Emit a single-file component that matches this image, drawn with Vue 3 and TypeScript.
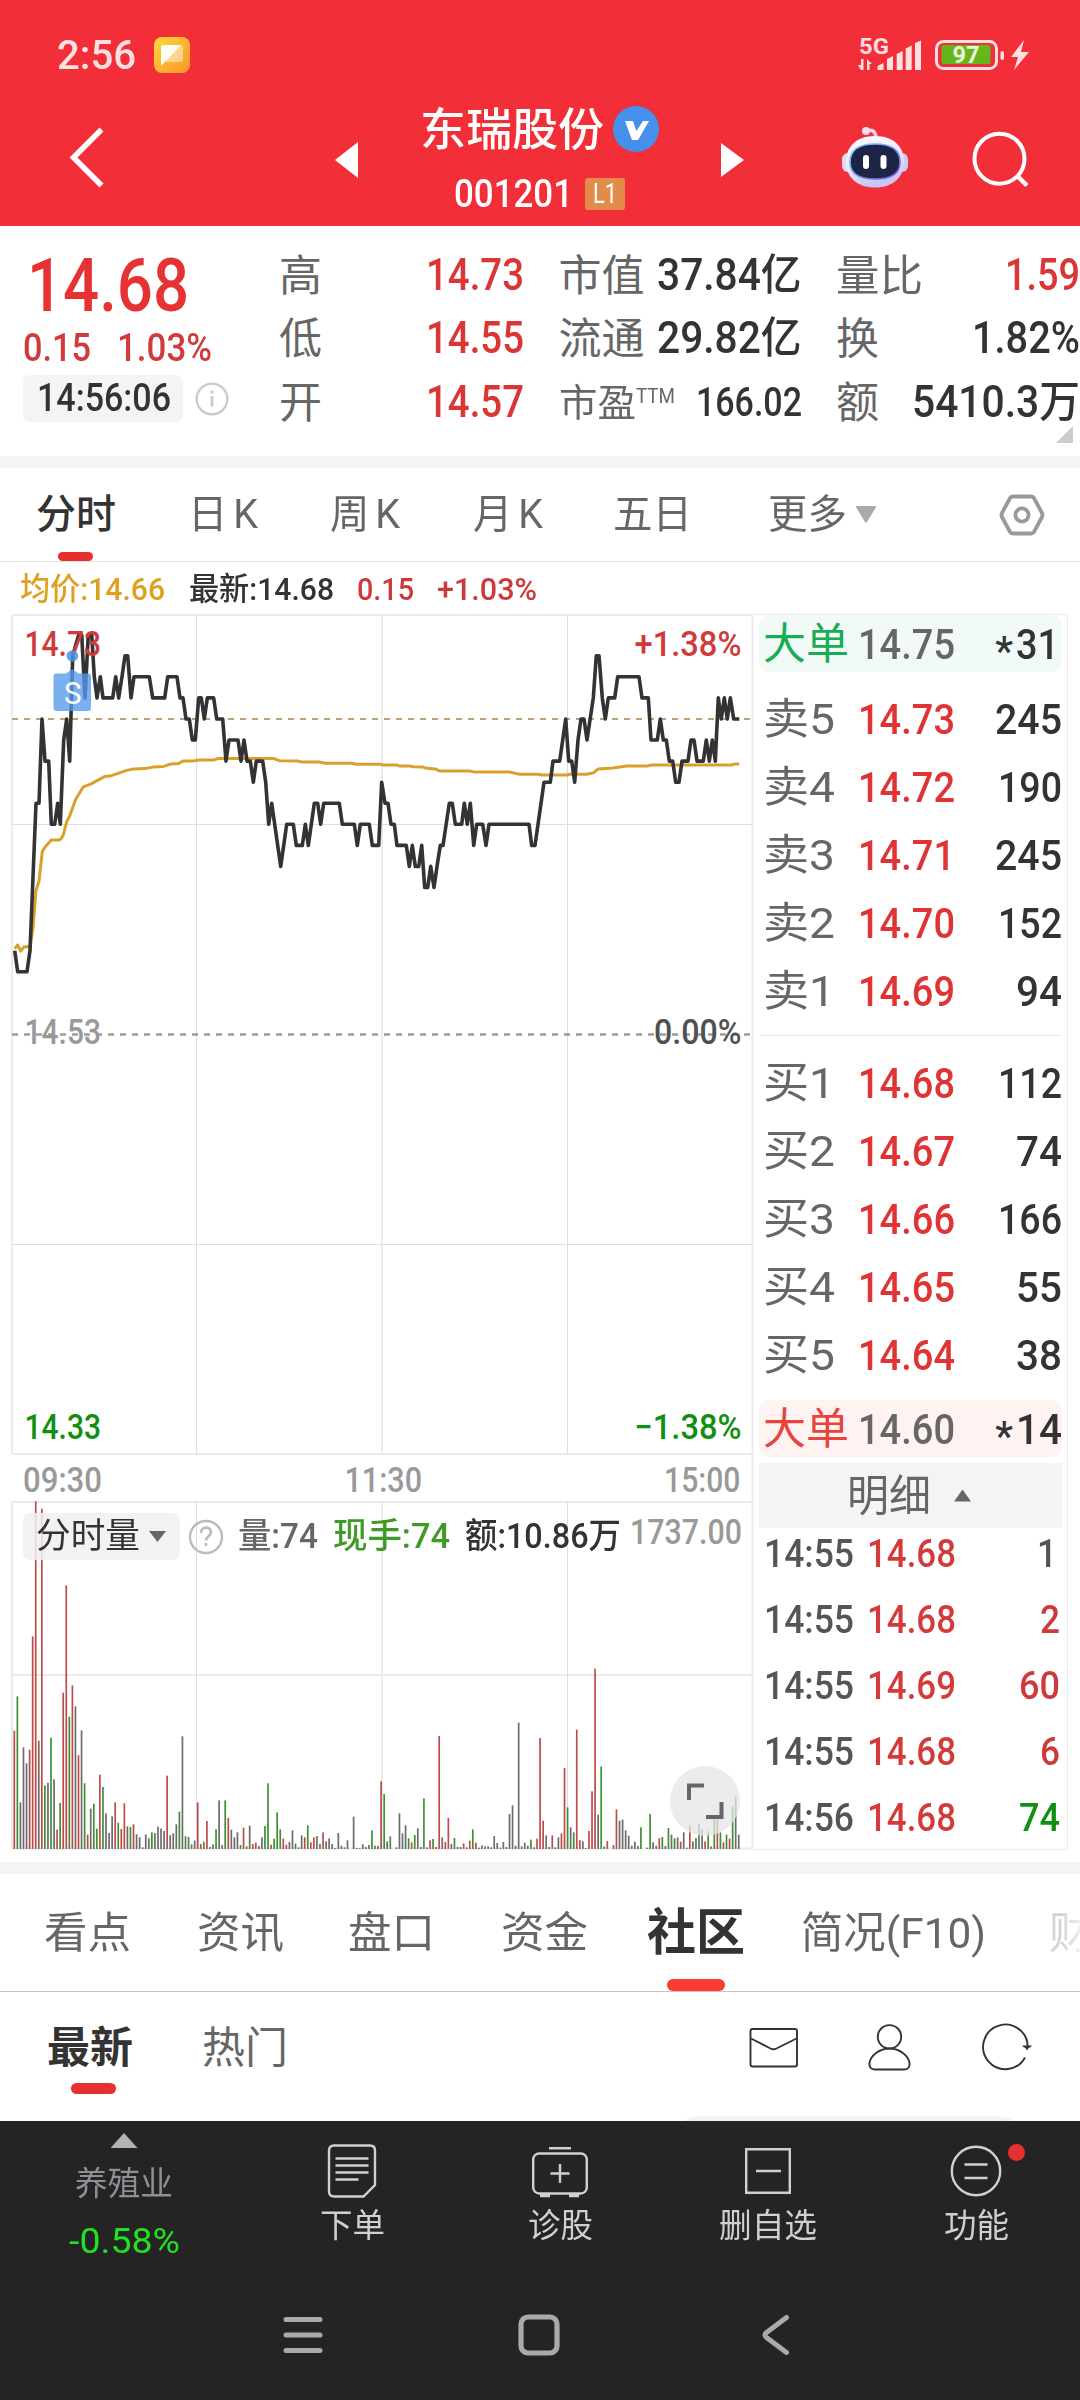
<script setup lang="ts">
// v-fit sets the laid-out width of a text run in pixels; glyphs are condensed or widened to fill it.
const vFit = {
  mounted(el: HTMLElement, { value }: { value: number }) {
    el.style.display = 'inline-block'
    el.style.whiteSpace = 'nowrap'
    el.style.flex = 'none'
    const natural = el.getBoundingClientRect().width
    el.style.transformOrigin = '0 50%'
    el.style.transform = `scaleX(${value / natural})`
    el.style.marginRight = `${value - natural}px`
  },
}

type Stat = { label: string; lw: number; value: string; vw: number; red?: boolean; ttm?: boolean }
const stats: Stat[] = [
  { label: '高', lw: 43, value: '14.73', vw: 98, red: true },
  { label: '市值', lw: 86, value: '37.84亿', vw: 144.5 },
  { label: '量比', lw: 87, value: '1.59', vw: 75, red: true },
  { label: '低', lw: 43, value: '14.55', vw: 98, red: true },
  { label: '流通', lw: 86, value: '29.82亿', vw: 144.5 },
  { label: '换', lw: 43, value: '1.82%', vw: 108 },
  { label: '开', lw: 43, value: '14.57', vw: 98, red: true },
  { label: '市盈', lw: 77, value: '166.02', vw: 106, ttm: true },
  { label: '额', lw: 43, value: '5410.3万', vw: 168 },
]

const periods = [
  { name: '分时', w: 80 },
  { name: '日K', w: 76 },
  { name: '周K', w: 76 },
  { name: '月K', w: 76 },
  { name: '五日', w: 79 },
  { name: '更多', w: 79 },
]

const asks = [
  ['卖5', '14.73', '245', 67], ['卖4', '14.72', '190', 64], ['卖3', '14.71', '245', 67],
  ['卖2', '14.70', '152', 64], ['卖1', '14.69', '94', 46],
] as [string, string, string, number][]
const bids = [
  ['买1', '14.68', '112', 64], ['买2', '14.67', '74', 46], ['买3', '14.66', '166', 64],
  ['买4', '14.65', '55', 46], ['买5', '14.64', '38', 46],
] as [string, string, string, number][]
const ticks = [
  ['14:55', '14.68', '1', 'flat', 20], ['14:55', '14.68', '2', 'up', 20], ['14:55', '14.69', '60', 'up', 41],
  ['14:55', '14.68', '6', 'up', 20], ['14:56', '14.68', '74', 'down', 41],
] as [string, string, string, string, number][]

// Price trace: x in thirds of a pixel, price in cents over 14.00
const trace: number[][] = [
  [44,57],[53,56],[81,56],[90,57],[108,64],[117,64],[126,68],[135,66],[146,66],[154,63],[164,63],[173,64],[181,63],
  [191,67],[200,68],[209,66],[218,71],[236,72],[245,72],[255,69],[265,72],[275,72],[283,70],[291,69],[301,70],[309,69],
  [338,69],[347,70],[356,69],[366,70],[375,71],[383,71],[393,69],[402,70],[448,70],[458,69],[494,69],[503,70],[531,70],
  [540,69],[549,69],[558,68],[568,68],[577,67],[586,67],[596,69],[604,69],[613,68],[622,69],[641,69],[650,68],[668,68],
  [678,66],[687,67],[714,67],[723,66],[732,67],[741,66],[751,66],[760,65],[769,66],[788,66],[797,65],[806,63],[815,64],
  [842,61],[860,63],[880,63],[889,62],[907,62],[916,63],[925,62],[943,64],[953,64],[962,63],[971,64],[1018,64],[1027,63],
  [1063,63],[1072,62],[1081,63],[1108,63],[1117,62],[1136,62],[1145,65],[1155,64],[1164,64],[1173,63],[1183,63],
  [1191,62],[1219,62],[1228,61],[1237,62],[1246,61],[1256,61],[1265,62],[1274,60],[1283,60],[1292,61],[1302,60],[1311,61],
  [1321,62],[1329,62],[1348,64],[1357,64],[1366,63],[1385,63],[1393,64],[1402,63],[1411,64],[1421,62],[1430,63],[1448,63],
  [1458,62],[1467,63],[1587,63],[1595,62],[1605,62],[1632,65],[1651,65],[1659,66],[1679,66],[1697,68],[1706,66],[1715,66],
  [1724,65],[1734,67],[1743,68],[1752,68],[1761,67],[1780,69],[1789,71],[1797,71],[1807,69],[1816,68],[1825,69],[1844,69],
  [1853,70],[1917,70],[1926,69],[1945,69],[1953,67],[1972,67],[1981,68],[1990,67],[1999,67],[2008,66],[2018,66],[2027,65],
  [2037,65],[2046,66],[2064,66],[2073,67],[2082,67],[2091,66],[2110,66],[2119,67],[2128,66],[2137,67],[2146,66],[2155,69],
  [2164,68],[2173,69],[2182,68],[2191,69],[2201,68],[2218,68],
]
const priceLine = trace.map(([x, c]) => `${(x / 3).toFixed(1)},${(1035 - (c - 53) * 21.07).toFixed(1)}`).join(' ')

// Average price trace
const average: number[][] = [
  [44,1368],[53,1358],[62,1375],[71,1364],[90,1362],[99,1310],[108,1205],[117,1180],[127,1096],[136,1083],[154,1064],
  [178,1064],[184,1060],[190,1050],[200,1012],[209,997],[227,950],[250,915],[273,907],[315,886],[330,885],[380,869],
  [402,865],[435,864],[458,860],[490,858],[514,851],[535,850],[549,843],[580,843],[598,840],[640,840],[655,836],[822,836],
  [838,842],[895,843],[905,846],[960,846],[975,849],[1055,849],[1068,852],[1140,852],[1150,854],[1190,854],[1200,857],
  [1230,857],[1240,859],[1268,860],[1277,862],[1305,865],[1320,871],[1410,871],[1425,874],[1530,874],[1558,880],
  [1615,880],[1625,882],[1700,882],[1710,880],[1760,880],[1780,876],[1795,865],[1840,862],[1880,857],[1940,857],
  [1955,854],[2195,854],[2205,851],[2218,851],
]
const averageLine = average.map(([x, y]) => `${(x / 3).toFixed(1)},${(460 + y / 2.8).toFixed(1)}`).join(' ')

// One entry per minute: bar height in thirds of a pixel and direction (r up, g down, k flat)
const minuteVolume =
  '355r 458g 140k 305k 257k 298r 638r 1043r 325k 1021r 191g 199k 334g 209k 58r 138g 469r 791r 397g 491r 428k 281r 356k 197g 43r 121k 136g 61g 223r 186g 107k 48k 98k 140r 79g 60r 137r 68k 66g 74r 44k 35k 5k 44k 32k 50g 48k 67k 61k 54k 220r 41k 47k 74k 112g 338k 38g 36k 14g 25k 140r 15r 22g 84r 6k 14k 59g 146k 12k 146g 93r 58k 35k 50k 12g 64r 8g 70k 15r 19r 9k 35k 69g 197g 13r 31g 110g 59g 31r 13r 21k 56k 16g 5k 41k 35r 71g 20r 35r 39k 15g 50r 23k 32k 15k 3k 48k 10k 5k 26k 0k 97k 3g 3r 14k 6k 12k 56g 10k 9k 203r 165g 23k 38g 0k 5k 107k 47k 71k 32g 20r 42g 62k 6r 152g 5k 26r 30g 6r 339r 35k 21r 93r 15k 33g 6k 6k 17r 5r 25r 59g 19r 4k 11k 8g 8r 5k 39k 18k 4k 21k 6k 105k 131k 10k 379k 8k 19k 10k 28g 5k 31r 333r 85r 41k 6k 41r 5k 35k 47r 243r 125g 65k 50g 358r 26r 23k 3g 54r 173r 541r 103k 248g 8g 24r 0k 12k 119r 85k 88k 56k 40k 10k 22k 9k 65g 0k 4k 105g 20k 10k 32r 36g 9k 63g 43k 32g 35k 22r 50k 4k 69r 23k 33g 75k 57k 23r 53g 8r 96g 89r 50g 20r 43g 31r 128g 157k 43k'
const barColor: Record<string, string> = { r: '#c04a4a', g: '#3f8f35', k: '#6c6c6c' }
const bars = minuteVolume.split(' ').map((entry, i) => {
  const h = parseInt(entry) / 3
  return { x: (42.2 + 9.17 * i) / 3 - 0.6, y: 1849 - h, h, color: barColor[entry.slice(-1)] }
})

const sections = [
  { name: '看点', w: 87 }, { name: '资讯', w: 87 }, { name: '盘口', w: 87 },
  { name: '资金', w: 87 }, { name: '社区', w: 98, active: true },
  { name: '简况(F10)', w: 185 }, { name: '财', w: 43, faded: true },
]
</script>

<template>
  <div class="app">
    <header class="header">
      <div class="status">
        <span v-fit="79" class="clock">2:56</span>
        <svg class="note" width="36" height="36" viewBox="0 0 36 36">
          <defs><linearGradient id="note" x1="0" y1="0" x2="1" y2="1"><stop offset="0" stop-color="#ffd83c" /><stop offset="1" stop-color="#fb9428" /></linearGradient></defs>
          <rect width="36" height="36" rx="8" fill="url(#note)" />
          <path d="M9 8h18a2 2 0 0 1 2 2v13a2 2 0 0 1-2 2H12z" fill="#fff" opacity=".45" />
          <path d="M8 8h19L7 29V9z" fill="#fffdf4" />
        </svg>
        <svg class="signal" width="174" height="48" viewBox="857 30 174 48">
          <text x="859" y="52.500" textLength="30" lengthAdjust="spacingAndGlyphs" class="five">5G</text>
          <g fill="#ffdfe0">
            <path d="M861 69l-3-5h3v-6h2.500v11zM867 69V58l5 5h-2.500v6z" />
            <path d="M877.500 69v-4l6-3v7zM887 69V58l6-3v14zM896.700 69V53l6-3v19zM905.700 69V47.500l6-3V69zM915 69V42l6-2.500V69z" />
            <rect x="1000.500" y="50" width="3.500" height="9" rx="1.700" />
            <path d="M1024 39l-13 17h7l-4 13 15-18h-8l3-12z" />
          </g>
          <rect x="936.500" y="40.500" width="60" height="27" rx="7" fill="none" stroke="#ffdfe0" stroke-width="3" />
          <rect x="941.500" y="44" width="49" height="19" rx="2" fill="#67b51c" />
          <text x="952.500" y="62" textLength="27" lengthAdjust="spacingAndGlyphs" class="charge">97</text>
        </svg>
      </div>
      <div class="titlebar">
        <svg class="back" width="40" height="64" viewBox="67 125 40 64"><path d="M101.500 129.500L73.500 157.500 101.500 185.500" fill="none" stroke="#fff" stroke-width="5.500" /></svg>
        <svg class="prev" width="24" height="36" viewBox="0 0 24 36"><path d="M23 0v36L0 18z" fill="#fff" /></svg>
        <div class="names">
          <div class="stock"><span v-fit="184">东瑞股份</span>
            <svg width="46" height="46" viewBox="0 0 46 46"><circle cx="23" cy="23" r="23" fill="#4590ea" /><path d="M12 15h8l3.300 10L30 15h6L25 34h-6z" fill="#fff" /></svg>
          </div>
          <div class="code"><span v-fit="119">001201</span><b class="level"><span v-fit="24">L1</span></b></div>
        </div>
        <svg class="next" width="23" height="34" viewBox="0 0 23 34"><path d="M0 0v34l23-17z" fill="#fff" /></svg>
        <svg class="robot" width="68" height="64" viewBox="841 126 68 64">
          <defs>
            <linearGradient id="head" x1="0" y1="0" x2="0.300" y2="1"><stop offset="0" stop-color="#fff" /><stop offset=".6" stop-color="#e9e7fb" /><stop offset="1" stop-color="#c9c5f5" /></linearGradient>
            <linearGradient id="rim" x1="0" y1="0" x2="1" y2="1"><stop offset="0" stop-color="#7fd3ff" /><stop offset="1" stop-color="#6d52d8" /></linearGradient>
          </defs>
          <path d="M866 131.500c6-3 10 0 10 7" fill="none" stroke="#e8d9f4" stroke-width="3.500" />
          <circle cx="866" cy="131" r="4" fill="#f6dcec" />
          <rect x="842" y="153" width="12" height="19" rx="6" fill="#dfdcf8" /><rect x="896" y="153" width="12" height="19" rx="6" fill="#cfcaf4" />
          <path d="M875 136c19 0 29 11 29 26s-11 25.500-29 25.500S846 177 846 162s10-26 29-26z" fill="url(#head)" />
          <path d="M875 144c17 0 25 6 25 18s-9 17-25 17-25-5-25-17 8-18 25-18z" fill="#1d2547" stroke="url(#rim)" stroke-width="1.600" />
          <rect x="863" y="155" width="6" height="14" rx="3" fill="#fff" /><rect x="880.500" y="155" width="6" height="14" rx="3" fill="#fff" />
        </svg>
        <svg class="search" width="60" height="60" viewBox="970 130 60 60"><g fill="none" stroke="#fff" stroke-width="4"><circle cx="999.500" cy="158.700" r="25" /><path d="M1017 175.500l10 10" stroke-width="4.500" /></g></svg>
      </div>
    </header>

    <section class="quote">
      <div class="price-block">
        <div class="price"><span v-fit="162">14.68</span></div>
        <div class="change"><span v-fit="68">0.15</span><span v-fit="95">1.03%</span></div>
        <div class="time-row">
          <div class="time"><span v-fit="134">14:56:06</span></div>
          <svg width="34" height="34" viewBox="0 0 34 34"><circle cx="17" cy="17" r="15.300" fill="none" stroke="#ccc" stroke-width="2.400" /><path d="M17 14v10.500M17 8.500v3" stroke="#ccc" stroke-width="3" /></svg>
        </div>
      </div>
      <div class="stats">
        <div v-for="s in stats" :key="s.label" class="stat" :class="{ ttm: s.ttm }">
          <span v-fit="s.lw" class="k">{{ s.label }}</span><span v-if="s.ttm" v-fit="39" class="sup">TTM</span>
          <div class="v" :class="{ red: s.red }"><span v-fit="s.vw">{{ s.value }}</span></div>
        </div>
      </div>
      <i class="expand"></i>
    </section>
    <div class="strip"></div>

    <nav class="periods">
      <div v-for="(p, i) in periods" :key="p.name" class="period" :class="{ on: i === 0, k: p.name.endsWith('K') }">
        <span v-fit="p.w">{{ p.name }}</span>
      </div>
      <svg class="more" width="20" height="17" viewBox="0 0 20 17"><path d="M1 0h18q2 0 .5 2L11 16q-1 1.500-2 0L.5 2Q-1 0 1 0z" fill="#aaa" /></svg>
      <svg class="gear" width="46" height="44" viewBox="0 0 46 44"><g fill="none" stroke="#999" stroke-width="3.800" stroke-linejoin="round"><path d="M14 3.500h18q2 0 3 1.600L43 20q1 2 0 4L35 38.900Q34 40.500 32 40.500H14q-2 0-3-1.600L3 24q-1-2 0-4L11 5.100Q12 3.500 14 3.500z" /><circle cx="23" cy="22" r="6.600" /></g></svg>
    </nav>

    <div class="legend">
      <span v-fit="145" class="avg">均价:14.66</span>
      <span v-fit="145">最新:14.68</span>
      <span v-fit="57" class="up">0.15</span>
      <span v-fit="100" class="up">+1.03%</span>
    </div>

    <main class="board">
      <div class="charts">
        <svg width="754" height="1237" viewBox="0 614 754 1237">
          <g fill="none" stroke="#ebebeb" stroke-width="2">
            <path d="M12 615H753M12 1454H753M12 615V1454M752.500 615V1850M382 615V1454" />
            <path d="M12 1502H753M12 1675H753M12 1848.500H753M12 1502V1849M382 1502V1849" />
          </g>
          <path d="M196.500 615V1454M567.500 615V1454M196.500 1502V1849M567.500 1502V1849M12 824.500H752M12 1244.500H752" stroke="#dedede" fill="none" />
          <path d="M12 719H750" stroke="#bda276" stroke-width="1.800" stroke-dasharray="6 6" />
          <path d="M12 1034.500H750" stroke="#9c9c9c" stroke-width="2.400" stroke-dasharray="6 6" />
          <polyline :points="averageLine" fill="none" stroke="#daa02c" stroke-width="3" stroke-linejoin="round" />
          <polyline :points="priceLine" fill="none" stroke="#333" stroke-width="3.600" stroke-linejoin="round" />
          <g class="axis">
            <text x="24.500" y="656" textLength="76.500" lengthAdjust="spacingAndGlyphs" fill="#cf3a3a">14.73</text>
            <text x="634.500" y="656" textLength="107" lengthAdjust="spacingAndGlyphs" fill="#cf3a3a">+1.38%</text>
            <text x="24.500" y="1043.500" textLength="76.500" lengthAdjust="spacingAndGlyphs" fill="#999">14.53</text>
            <text x="654" y="1043.500" textLength="87.500" lengthAdjust="spacingAndGlyphs" fill="#505050">0.00%</text>
            <text x="24.500" y="1439" textLength="76.500" lengthAdjust="spacingAndGlyphs" fill="#109010">14.33</text>
            <text x="634.500" y="1439" textLength="107" lengthAdjust="spacingAndGlyphs" fill="#109010">−1.38%</text>
            <text x="23" y="1492" textLength="79" lengthAdjust="spacingAndGlyphs" fill="#999">09:30</text>
            <text x="344.500" y="1492" textLength="77.500" lengthAdjust="spacingAndGlyphs" fill="#999">11:30</text>
            <text x="664" y="1492" textLength="76.500" lengthAdjust="spacingAndGlyphs" fill="#999">15:00</text>
            <text x="630" y="1543.500" textLength="112" lengthAdjust="spacingAndGlyphs" fill="#999">1737.00</text>
          </g>
          <circle cx="72.300" cy="656" r="5.800" fill="#4a90e2" opacity=".85" />
          <path d="M56 673.500h10l6.300-4.500 6.300 4.500H88a3 3 0 0 1 3 3V708a3 3 0 0 1-3 3H56.500a3 3 0 0 1-3-3V676.500a3 3 0 0 1 3-3z" fill="#5598ec" opacity=".78" />
          <text x="64" y="703.500" textLength="17.500" lengthAdjust="spacingAndGlyphs" class="sell">S</text>
          <rect v-for="(b, i) in bars" :key="i" :x="b.x" :y="b.y" width="1.700" :height="b.h" :fill="b.color" />
        </svg>
        <div class="volume-head">
          <div class="picker"><span v-fit="104">分时量</span><i></i></div>
          <svg width="36" height="36" viewBox="0 0 36 36"><circle cx="18" cy="18" r="16" fill="none" stroke="#bbb" stroke-width="2.400" /><path d="M13 14c0-7 10-7 10-1 0 4-5 4.500-5 8.500M18 24v3" fill="none" stroke="#bbb" stroke-width="2.600" /></svg>
          <span v-fit="80" class="vol">量:74</span>
          <span v-fit="117" class="now">现手:74</span>
          <span v-fit="156" class="amt">额:10.86万</span>
        </div>
        <svg class="full" width="70" height="70" viewBox="0 0 70 70"><circle cx="35" cy="35" r="35" fill="#e6e6e6" opacity=".75" /><path d="M19 34V19.500h15M51.500 36v15H36" fill="none" stroke="#666" stroke-width="4" /></svg>
      </div>

      <aside class="book">
        <div class="row big sell-big"><span v-fit="86" class="tag">大单</span><span v-fit="97" class="p">14.75</span><div class="n"><i class="star">*</i><span v-fit="43">31</span></div></div>
        <div class="side asks">
          <div v-for="r in asks" :key="r[0]" class="row"><span v-fit="72" class="name">{{ r[0] }}</span><span v-fit="97" class="p">{{ r[1] }}</span><div class="n"><span v-fit="r[3]">{{ r[2] }}</span></div></div>
        </div>
        <div class="side bids">
          <div v-for="r in bids" :key="r[0]" class="row"><span v-fit="72" class="name">{{ r[0] }}</span><span v-fit="97" class="p">{{ r[1] }}</span><div class="n"><span v-fit="r[3]">{{ r[2] }}</span></div></div>
        </div>
        <div class="row big buy-big"><span v-fit="86" class="tag">大单</span><span v-fit="97" class="p">14.60</span><div class="n"><i class="star">*</i><span v-fit="46">14</span></div></div>
        <div class="detail"><span v-fit="84">明细</span><i></i></div>
        <div class="ticks">
          <div v-for="(t, i) in ticks" :key="i" class="tick"><span v-fit="90">{{ t[0] }}</span><span v-fit="89" class="p">{{ t[1] }}</span><div class="n" :class="t[3]"><span v-fit="t[4]">{{ t[2] }}</span></div></div>
        </div>
      </aside>
    </main>
    <div class="strip low"></div>

    <nav class="sections">
      <div v-for="s in sections" :key="s.name" class="section" :class="{ active: s.active, faded: s.faded }"><span v-fit="s.w">{{ s.name }}</span></div>
    </nav>

    <div class="feed">
      <div class="feed-tab on"><span v-fit="86">最新</span></div>
      <div class="feed-tab"><span v-fit="86">热门</span></div>
      <svg class="mail" width="50" height="50" viewBox="749 2022 50 50"><g fill="none" stroke="#333" stroke-width="1.900" stroke-linejoin="round"><rect x="750.500" y="2029" width="46.500" height="37.500" rx="2" /><path d="M751 2038.500l19.500 10q3 1.500 6 0l20-10" /></g></svg>
      <svg class="person" width="44" height="50" viewBox="867 2022 44 50"><g fill="none" stroke="#333" stroke-width="1.900"><circle cx="889.500" cy="2036.800" r="11.700" /><path d="M889.500 2048.500c10 0 19 7 20 14.500.5 4-1.500 6.500-5 6.500h-30c-3.500 0-5.500-2.500-5-6.500 1-7.500 10-14.500 20-14.500z" /></g></svg>
      <svg class="reload" width="50" height="50" viewBox="981 2022 50 50"><path d="M1024 2057.500a22.300 22.300 0 1 1 2.700-11" fill="none" stroke="#333" stroke-width="1.900" /><path d="M1021 2045.500h10q-1.500 2-3.500 2.500l-1.500 2.500-1.500-2.500q-2-.5-3.500-2.500z" fill="#333" /></svg>
      <i class="peek"></i>
    </div>

    <footer class="dock">
      <div class="actions">
        <div class="action sector"><i></i><span v-fit="98" class="sec">养殖业</span><span v-fit="112" class="pct">-0.58%</span></div>
        <div class="action">
          <svg width="60" height="56" viewBox="-6 -1 60 56"><g fill="none" stroke="#d0d0d0" stroke-width="2.400"><path d="M6 1.500h36q5 0 5 5V41L35.500 52.500H6q-5 0-5-5v-41q0-5 5-5z" /><path d="M7.500 14.500h33M7.500 21.500h33M7.500 28.500h33M7.500 35.500h23" /></g></svg>
          <span v-fit="65">下单</span>
        </div>
        <div class="action">
          <svg width="60" height="56" viewBox="-2 -4 60 56"><g fill="none" stroke="#d0d0d0" stroke-width="2.400"><rect x="1.200" y="6.500" width="53.600" height="40" rx="6" /><path d="M17 1.200h22M28 17v19M18.500 26.500h19" /><path d="M8 48.500h10M37 48.500h10" stroke-width="3.500" /></g></svg>
          <span v-fit="65">诊股</span>
        </div>
        <div class="action">
          <svg width="60" height="56" viewBox="-7 -5 60 56"><path d="M1.200 1.200h43.600v43.600H1.200zM11 23h25" fill="none" stroke="#d0d0d0" stroke-width="2.400" /></svg>
          <span v-fit="98">删自选</span>
        </div>
        <div class="action">
          <svg width="60" height="56" viewBox="-4.500 -3 60 56"><g fill="none" stroke="#d0d0d0" stroke-width="2.400"><circle cx="25.500" cy="25" r="24.200" /><path d="M14 18.500h23M14 32h23" /></g></svg>
          <span v-fit="65">功能</span><i class="dot"></i>
        </div>
      </div>
      <div class="system">
        <svg width="40" height="44" viewBox="0 0 40 44"><path d="M3 6.600h34M3 22h34M3 37.400h34" stroke="#aaa" stroke-width="5" stroke-linecap="round" /></svg>
        <svg width="42" height="44" viewBox="0 0 42 44"><rect x="3" y="4" width="36" height="36" rx="7" fill="none" stroke="#aaa" stroke-width="5.200" /></svg>
        <svg width="30" height="44" viewBox="0 0 30 44"><path d="M25.500 4.500L5.500 19.500q-3 2.500 0 5l20 15" fill="none" stroke="#aaa" stroke-width="5" stroke-linecap="round" stroke-linejoin="round" /></svg>
      </div>
    </footer>
  </div>
</template>

<style>
body { background: #fff; }
</style>

<style scoped>
.app { width: 1080px; height: 2400px; overflow: hidden; background: #fff; color: #333; font-family: Roboto, "Noto Sans CJK SC", sans-serif; font-size: 43px; line-height: 1; }
.app * { box-sizing: border-box; }
svg { display: block; flex: none; overflow: visible; }

.header { height: 226px; background: #f22f38; color: #fff; }
.status { height: 109px; padding: 0 49px 0 57px; display: flex; align-items: center; }
.clock { font-size: 41px; color: #ffe0e1; font-weight: 500; padding-top: 1px; }
.note { margin-left: 18px; }
.signal { margin-left: auto; }
.five { font-size: 22px; font-weight: 700; fill: #ffdfe0; }
.charge { font-size: 24px; font-weight: 700; fill: #eaf6d8; }
.titlebar { display: flex; align-items: flex-start; }
.back { margin: 16px 0 0 67px; }
.prev { margin: 33px 0 0 228px; }
.names { margin: -3px 0 0 61px; width: 240px; }
.stock { display: flex; align-items: center; height: 46px; font-size: 45px; font-weight: 500; gap: 9px; }
.stock span { padding-top: 3px; }
.code { display: flex; align-items: center; margin: 25px 0 0 34px; height: 33px; font-size: 38px; font-weight: 500; }
.level { margin-left: 12px; width: 40px; height: 32px; padding-left: 8px; border-radius: 3px; background: #e38b49; font-size: 27px; font-weight: 400; line-height: 32px; }
.next { margin: 34px 0 0 61px; }
.robot { margin: 17px 0 0 97px; }
.search { margin: 21px 0 0 61px; }

.quote { position: relative; height: 230px; display: flex; }
.price-block { width: 279px; padding: 30px 0 0 23px; }
.price { height: 60px; line-height: 60px; font-size: 74px; font-weight: 500; color: #e63232; padding-left: 4px; }
.change { display: flex; gap: 26px; margin-top: 13px; height: 38px; line-height: 38px; font-size: 38px; font-weight: 500; color: #d03a3a; }
.time-row { display: flex; align-items: center; gap: 12px; margin-top: 8px; }
.time { width: 160px; height: 47px; padding-left: 14px; line-height: 47px; border-radius: 7px; background: #f4f4f4; font-size: 38px; font-weight: 500; }
.stats { display: grid; grid-template-columns: 245px 243px 244px; grid-template-rows: 64px 63px 64px; column-gap: 34.500px; padding-top: 17.500px; }
.stat { display: flex; align-items: center; line-height: 50px; }
.stat .k { color: #666; }
.v { margin-left: auto; font-weight: 500; font-size: 43.500px; }
.ttm .k { font-size: 38px; }
.ttm .v { font-size: 40px; }
.sup { font-size: 21px; line-height: 20px; color: #666; font-weight: 400; margin-top: -14px; }
.red { color: #db3636; }
.expand { position: absolute; right: 7px; bottom: 13px; border-left: 17px solid transparent; border-bottom: 17px solid #ccc; }
.strip { height: 12px; background: #f4f4f4; }

.periods { height: 94px; border-bottom: 1px solid #e2e2e2; display: grid; grid-template-columns: 152px 141.500px 143px 140.500px 154.500px 88.500px 143px 1fr; padding-left: 36px; align-items: center; font-size: 40px; color: #666; line-height: 94px; }
.period { position: relative; height: 93px; }
.period.k { letter-spacing: 6px; }
.on { color: #333; font-weight: 500; }
.period.on::after { content: ""; position: absolute; left: 22px; bottom: 0; width: 35px; height: 9px; border-radius: 5px; background: #e63030; }

.legend { height: 52px; display: flex; padding-left: 20px; line-height: 55px; font-size: 31.500px; font-weight: 500; }
.legend span:nth-child(2) { margin-left: 24px; }
.legend span:nth-child(3) { margin-left: 23px; }
.legend span:nth-child(4) { margin-left: 23px; }
.avg { color: #dda022; }
.up { color: #cc3a3a; }

.board { height: 1236px; display: flex; }
.charts { position: relative; width: 754px; flex: none; }
.axis { font-size: 35px; font-weight: 500; }
.sell { font-size: 32px; fill: #fff; }
.volume-head { position: absolute; left: 23px; top: 899px; height: 47px; display: flex; align-items: center; font-size: 35px; line-height: 49px; font-weight: 500; }
.picker { width: 157px; height: 47px; padding-left: 13px; border-radius: 7px; background: rgba(240, 240, 240, .85); display: flex; align-items: center; gap: 9px; font-weight: 400; }
.picker i { width: 17px; height: 11px; background: #666; clip-path: polygon(0 0, 100% 0, 50% 100%); }
.volume-head svg { margin-left: 8px; }
.vol { margin-left: 14px; color: #666; }
.now { margin-left: 15px; color: #3f9a28; }
.amt { margin-left: 15px; }
.full { position: absolute; left: 670px; top: 1152px; }

.book { width: 314px; height: 1236px; border: 1px solid #ebebeb; border-left: 0; padding: 0 5px; flex: none; }
.row { display: grid; grid-template-columns: 94.500px 110px 1fr; height: 68px; line-height: 68px; padding: 0 0 0 4px; align-items: center; justify-items: start; }
.name { color: #666; }
.p { color: #e03333; font-weight: 500; }
.n { font-weight: 500; justify-self: end; display: flex; }
.big { height: 57px; line-height: 59px; border-radius: 11px; }
.big .p { color: #666; }
.star { position: relative; top: 7px; font-style: normal; font-size: 40px; margin-right: 3px; }
.sell-big { background: #f1faf6; }
.sell-big .n { padding-right: 3px; }
.sell-big .tag { color: #17ad52; }
.buy-big { background: #fff3f2; margin-top: 11px; }
.buy-big .tag { color: #e8433c; }
.asks { margin-top: 13px; height: 351px; border-bottom: 1px solid #ebebeb; }
.bids { padding-top: 13px; height: 353px; }
.detail { margin-top: 6px; height: 65px; line-height: 68px; background: #f4f4f4; display: flex; align-items: center; padding-left: 88px; color: #666; }
.detail i { width: 17px; height: 12px; margin-left: 23px; background: #666; clip-path: polygon(50% 0, 100% 100%, 0 100%); }
.ticks { margin-top: -7.500px; }
.tick { display: grid; grid-template-columns: 103px 100px 1fr; height: 66px; line-height: 66px; padding: 0 2px 0 5px; font-size: 39.500px; font-weight: 500; color: #555; justify-items: start; }
.tick .p { color: #d43a3a; }
.tick .flat { color: #555; padding-right: 3px; }
.tick .up { color: #cc3a3a; }
.tick .down { color: #109010; }

.low { margin-top: 12px; }
.sections { height: 118px; border-bottom: 1px solid #c4c4c4; display: grid; grid-template-columns: 152.500px 151.500px 153px 146px 154px 248px 1fr; padding-left: 44px; line-height: 119px; color: #666; overflow: hidden; }
.section { position: relative; height: 117px; }
.section.active { font-size: 50px; font-weight: 700; color: #333; }
.section.active::after { content: ""; position: absolute; left: 20px; bottom: 0; width: 58px; height: 12px; border-radius: 6px; background: #fa3c32; }
.section.faded { color: #d4d4d4; -webkit-mask-image: linear-gradient(90deg, #000 30%, transparent 100%); mask-image: linear-gradient(90deg, #000 30%, transparent 100%); }

.feed { position: relative; height: 129px; display: flex; align-items: flex-start; padding-left: 47px; color: #666; line-height: 112px; overflow: hidden; }
.feed-tab { position: relative; width: 155px; height: 129px; }
.feed-tab.on { font-weight: 600; color: #333; }
.feed-tab.on::after { content: ""; position: absolute; left: 24px; top: 91px; width: 45px; height: 11px; border-radius: 6px; background: #e63030; }
.mail { margin: 30px 0 0 392px; }
.person { margin: 30px 0 0 68px; }
.reload { margin: 30px 0 0 71px; }
.peek { position: absolute; left: 670px; top: 124px; width: 358px; height: 60px; border-radius: 30px; background: #f4f4f4; }

.dock { height: 279px; background: #242424; color: #d0d0d0; }
.actions { display: grid; grid-template-columns: 248px 208px 208px 208px 208px; height: 149px; }
.action { position: relative; display: flex; flex-direction: column; align-items: center; padding-top: 22px; font-size: 33px; line-height: 40px; }
.action svg + span { margin-top: 6.500px; }
.sector { padding-top: 12px; }
.sector i { width: 27px; height: 15px; background: #b3b3b3; clip-path: polygon(50% 0, 100% 100%, 0 100%); }
.sec { color: #8f8f96; margin-top: 15.500px; }
.pct { color: #22e022; font-size: 35px; margin-top: 18px; padding-left: 1px; }
.dot { position: absolute; left: 136px; top: 23px; width: 17px; height: 17px; border-radius: 50%; background: #e63030; }
.system { display: flex; padding: 43px 0 0 283px; }
.system svg:nth-child(2) { margin-left: 195px; }
.system svg:nth-child(3) { margin-left: 201px; }
</style>
